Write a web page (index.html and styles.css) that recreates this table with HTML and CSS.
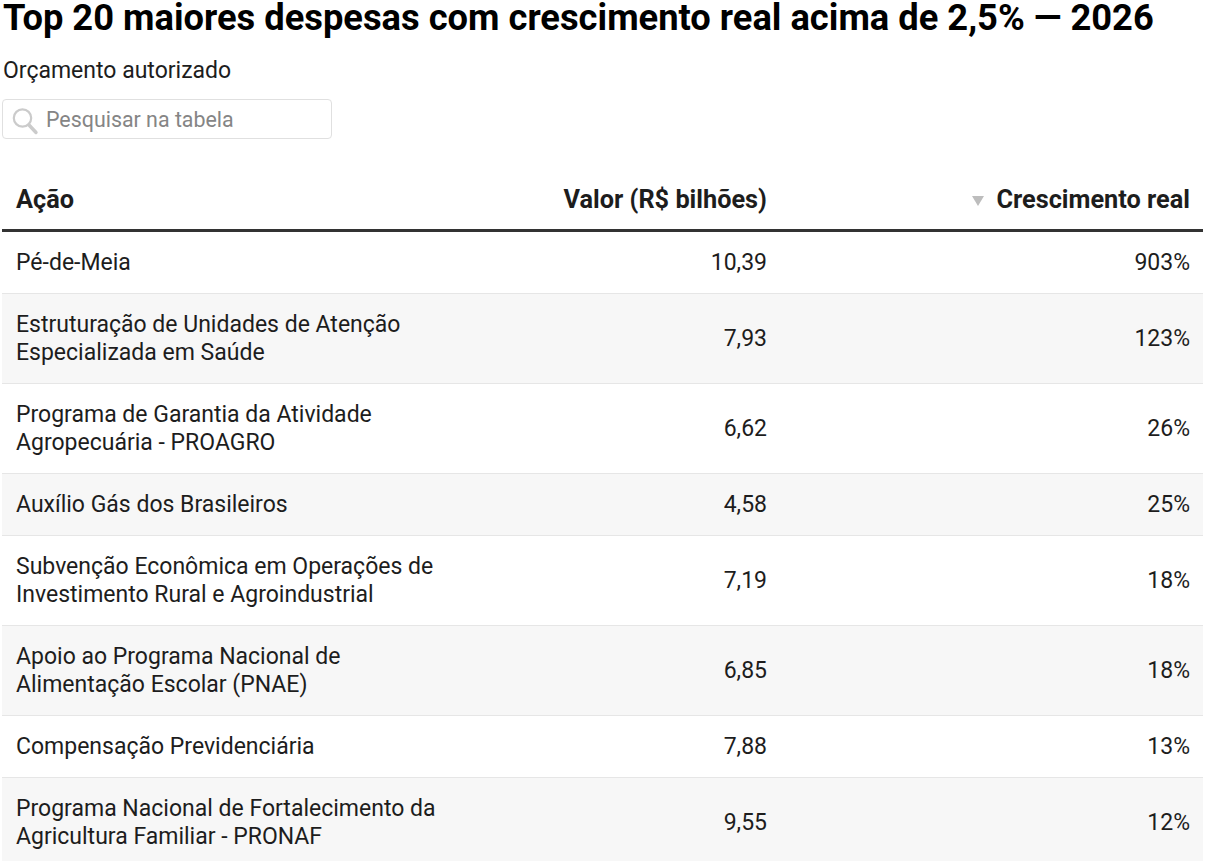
FILE: index.html
```html
<!DOCTYPE html>
<html lang="pt-BR">
<head>
<meta charset="utf-8">
<title>Top 20 maiores despesas</title>
<link rel="stylesheet" href="styles.css">
</head>
<body>
<div class="chart">
  <h1 class="title">Top 20 maiores despesas com crescimento real acima de 2,5% — 2026</h1>
  <p class="subtitle">Orçamento autorizado</p>
  <div class="search">
    <svg class="search-icon" width="28" height="28" viewBox="0 0 28 28" aria-hidden="true">
      <circle cx="11.5" cy="11" r="8.7" fill="none" stroke="#cbcbcb" stroke-width="2.2"/>
      <line x1="18" y1="18" x2="25" y2="25.5" stroke="#cbcbcb" stroke-width="3.4" stroke-linecap="round"/>
    </svg>
    <span class="search-placeholder">Pesquisar na tabela</span>
  </div>
  <table class="data">
    <colgroup>
      <col class="c-acao">
      <col class="c-valor">
      <col class="c-cresc">
    </colgroup>
    <thead>
      <tr>
        <th class="left">Ação</th>
        <th class="num">Valor (R$ bilhões)</th>
        <th class="num"><svg class="sort" width="12" height="10" viewBox="0 0 12 10" aria-hidden="true"><polygon points="0,0 12,0 6,10" fill="#bdbdbd"/></svg>Crescimento real</th>
      </tr>
    </thead>
    <tbody>
      <tr><td>Pé-de-Meia</td><td class="num">10,39</td><td class="num">903%</td></tr>
      <tr><td>Estruturação de Unidades de Atenção Especializada em Saúde</td><td class="num">7,93</td><td class="num">123%</td></tr>
      <tr><td>Programa de Garantia da Atividade Agropecuária - PROAGRO</td><td class="num">6,62</td><td class="num">26%</td></tr>
      <tr><td>Auxílio Gás dos Brasileiros</td><td class="num">4,58</td><td class="num">25%</td></tr>
      <tr><td>Subvenção Econômica em Operações de Investimento Rural e Agroindustrial</td><td class="num">7,19</td><td class="num">18%</td></tr>
      <tr><td>Apoio ao Programa Nacional de Alimentação Escolar (PNAE)</td><td class="num">6,85</td><td class="num">18%</td></tr>
      <tr><td>Compensação Previdenciária</td><td class="num">7,88</td><td class="num">13%</td></tr>
      <tr><td>Programa Nacional de Fortalecimento da Agricultura Familiar - PRONAF</td><td class="num">9,55</td><td class="num">12%</td></tr>
    </tbody>
  </table>
</div>
</body>
</html>
```
FILE: styles.css
```css
html, body {
  margin: 0;
  padding: 0;
  background: #fff;
}
body {
  font-family: Roboto, "Liberation Sans", Arial, sans-serif;
  color: #1d1d1d;
}
.chart {
  padding: 0 4px 0 2px;
}
.title {
  margin: 0;
  font-size: 36.3px;
  line-height: 35px;
  font-weight: 700;
  color: #000;
  padding-left: 1px;
}
.subtitle {
  margin: 22px 0 0 0;
  font-size: 23px;
  line-height: 28px;
  padding-left: 1px;
  color: #1d1d1d;
}
.search {
  margin-top: 14px;
  width: 320px;
  height: 38px;
  border: 1px solid #e0e0e0;
  border-radius: 4px;
  display: flex;
  align-items: center;
  gap: 7px;
  padding-left: 8px;
  box-sizing: content-box;
}
.search-icon {
  flex: none;
  margin-top: 4px;
}
.search-placeholder {
  font-size: 21.4px;
  color: #858585;
}
.data {
  margin-top: 32px;
  width: 1201px;
  border-collapse: collapse;
  table-layout: fixed;
  font-size: 23px;
  line-height: 28px;
}
.c-acao { width: 458px; }
.c-valor { width: 320px; }
.c-cresc { width: 423px; }
.data th {
  font-size: 25.3px;
  line-height: 30px;
  font-weight: 700;
  padding: 14px 13px 14px 14px;
  border-bottom: 3px solid #333;
  text-align: left;
  color: #1d1d1d;
  vertical-align: middle;
}
.data td {
  padding: 17px 13px 16px 14px;
  border-bottom: 1px solid #e6e6e6;
  vertical-align: middle;
  color: #1d1d1d;
}
.data .num {
  text-align: right;
}
.data tbody tr:nth-child(even) td {
  background: #f7f7f7;
}
.sort {
  margin-right: 12px;
  vertical-align: 2px;
}
```
